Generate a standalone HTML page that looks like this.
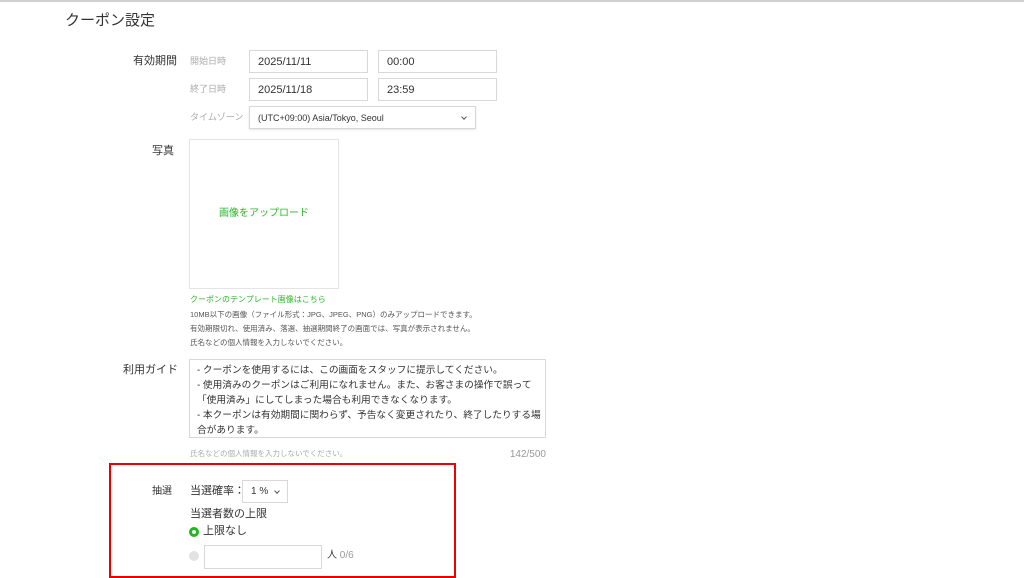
<!DOCTYPE html>
<html><head><meta charset="utf-8"><style>
*{margin:0;padding:0;box-sizing:border-box}
body{width:1024px;height:571px;overflow:hidden;background:#fff;position:relative;font-family:"Liberation Sans","Noto Sans CJK JP",sans-serif;color:#333}
.a{position:absolute;white-space:nowrap;line-height:1.2}
.inp{position:absolute;border:1px solid #d8d8d8;background:#fff;font-size:11px;color:#333;padding-left:8px;display:flex;align-items:center}
.lbl{font-size:9px;color:#aaa}
.sm{font-size:7.5px;color:#555}
.chev{position:absolute;width:4px;height:4px;border-right:1px solid #555;border-bottom:1px solid #555;transform:rotate(45deg)}
</style></head><body>
<div class="a" style="left:0;top:0;width:1024px;height:2px;background:#d0d0d0"></div>
<div class="a" style="left:65px;top:12px;font-size:15px;color:#333">クーポン設定</div>

<div class="a" style="left:133px;top:55px;font-size:11px">有効期間</div>
<div class="a lbl" style="left:190px;top:56px">開始日時</div>
<div class="inp" style="left:249px;top:50px;width:119px;height:23px">2025/11/11</div>
<div class="inp" style="left:378px;top:50px;width:119px;height:23px">00:00</div>
<div class="a lbl" style="left:190px;top:84px">終了日時</div>
<div class="inp" style="left:249px;top:78px;width:119px;height:23px">2025/11/18</div>
<div class="inp" style="left:378px;top:78px;width:119px;height:23px">23:59</div>
<div class="a lbl" style="left:190px;top:112px">タイムゾーン</div>
<div class="inp" style="left:249px;top:106px;width:227px;height:23px;font-size:9px;box-shadow:0 1px 2px rgba(0,0,0,.1)">(UTC+09:00) Asia/Tokyo, Seoul<span class="chev" style="left:212px;top:8px"></span></div>

<div class="a" style="left:152px;top:145px;font-size:11px">写真</div>
<div class="a" style="left:189px;top:139px;width:150px;height:150px;border:1px solid #e4e4e4"></div>
<div class="a" style="left:189px;top:208px;width:150px;text-align:center;font-size:10px;color:#2db52d">画像をアップロード</div>
<div class="a" style="left:190px;top:295px;font-size:8px;color:#2db52d">クーポンのテンプレート画像はこちら</div>
<div class="a sm" style="left:190px;top:310px">10MB以下の画像（ファイル形式：JPG、JPEG、PNG）のみアップロードできます。</div>
<div class="a sm" style="left:190px;top:324px">有効期限切れ、使用済み、落選、抽選期間終了の画面では、写真が表示されません。</div>
<div class="a sm" style="left:190px;top:338px">氏名などの個人情報を入力しないでください。</div>

<div class="a" style="left:123px;top:364px;font-size:11px">利用ガイド</div>
<div class="a" style="left:189px;top:359px;width:357px;height:79px;border:1px solid #d8d8d8;padding:3px 7px;font-size:9.7px;line-height:15px;color:#333;overflow:hidden">- クーポンを使用するには、この画面をスタッフに提示してください。<br>- 使用済みのクーポンはご利用になれません。また、お客さまの操作で誤って<br>「使用済み」にしてしまった場合も利用できなくなります。<br>- 本クーポンは有効期間に関わらず、予告なく変更されたり、終了したりする場<br>合があります。</div>
<div class="a" style="left:190px;top:449px;font-size:7.5px;color:#aaa">氏名などの個人情報を入力しないでください。</div>
<div class="a" style="left:500px;top:449px;width:46px;text-align:right;font-size:10px;color:#999">142/500</div>

<div class="a" style="left:109px;top:463px;width:347px;height:115px;border:2px solid #e00"></div>
<div class="a" style="left:152px;top:486px;font-size:10px">抽選</div>
<div class="a" style="left:190px;top:485px;font-size:11px">当選確率：</div>
<div class="inp" style="left:242px;top:480px;width:46px;height:23px;font-size:10px">1 %<span class="chev" style="left:32px;top:8px"></span></div>
<div class="a" style="left:190px;top:508px;font-size:11px">当選者数の上限</div>
<div class="a" style="left:189px;top:527px;width:10px;height:10px;border-radius:50%;border:3px solid #1fb81f;background:#fff"></div>
<div class="a" style="left:203px;top:525px;font-size:11px">上限なし</div>
<div class="a" style="left:189px;top:551px;width:10px;height:10px;border-radius:50%;background:#e2e2e2"></div>
<div class="inp" style="left:204px;top:545px;width:118px;height:24px"></div>
<div class="a" style="left:327px;top:550px;font-size:10px">人 <span style="color:#999">0/6</span></div>
</body></html>
